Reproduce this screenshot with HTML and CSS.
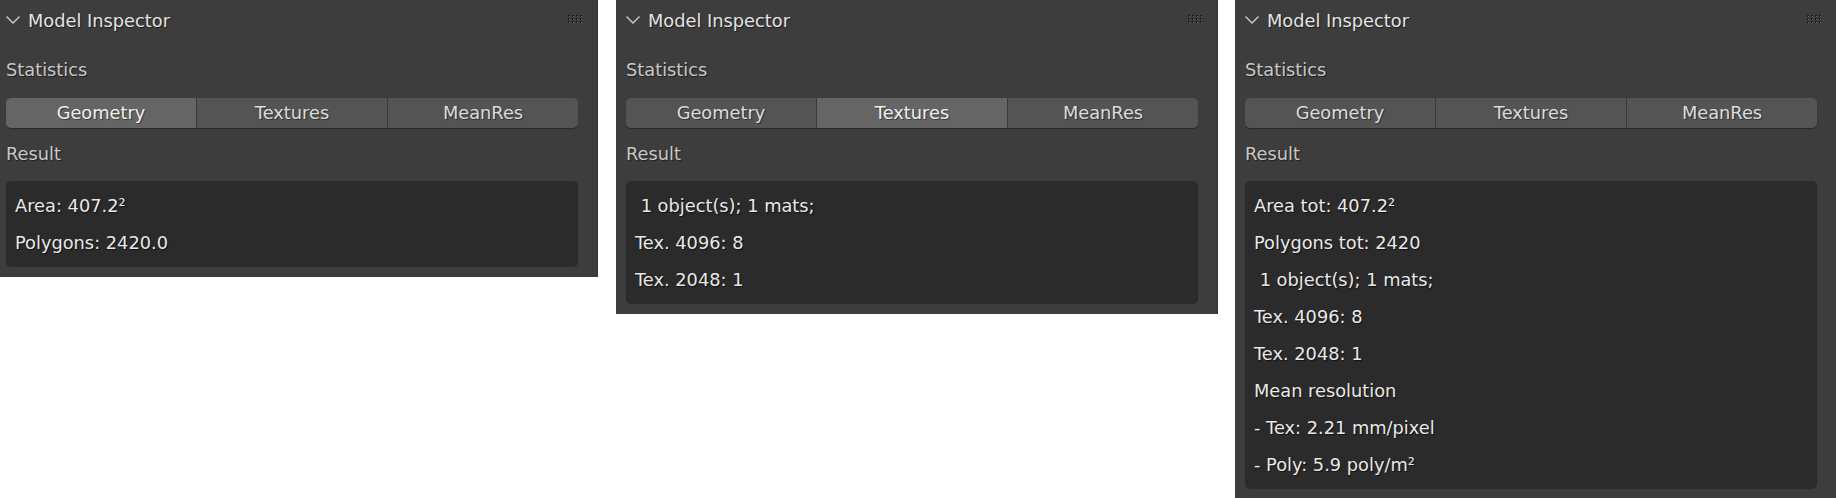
FILE: index.html
```html
<!DOCTYPE html>
<html lang="en">
<head>
<meta charset="utf-8">
<title>Model Inspector</title>
<link rel="stylesheet" href="styles.css">
</head>
<body>
<div class="panels">
  <section class="panel panel--cropped">
    <header class="panel-header">
      <svg class="chevron" width="16" height="10" viewBox="0 0 16 10"><polyline points="1.5,1.5 8,8 14.5,1.5" fill="none" stroke="#cfcfcf" stroke-width="1.3"/></svg>
      <span class="panel-title">Model Inspector</span>
      <svg class="grip" width="18" height="10" viewBox="0 0 18 10">
        <g fill="#1c1c1c"><rect x="1" y="1" width="2" height="2"/><rect x="5" y="1" width="2" height="2"/><rect x="9" y="1" width="2" height="2"/><rect x="13" y="1" width="2" height="2"/><rect x="1" y="4" width="2" height="2"/><rect x="5" y="4" width="2" height="2"/><rect x="9" y="4" width="2" height="2"/><rect x="13" y="4" width="2" height="2"/><rect x="1" y="7" width="2" height="2"/><rect x="5" y="7" width="2" height="2"/><rect x="9" y="7" width="2" height="2"/><rect x="13" y="7" width="2" height="2"/></g>
        <g fill="#6a6a6a"><rect x="2" y="2" width="1" height="1"/><rect x="6" y="2" width="1" height="1"/><rect x="10" y="2" width="1" height="1"/><rect x="14" y="2" width="1" height="1"/><rect x="2" y="5" width="1" height="1"/><rect x="6" y="5" width="1" height="1"/><rect x="10" y="5" width="1" height="1"/><rect x="14" y="5" width="1" height="1"/><rect x="2" y="8" width="1" height="1"/><rect x="6" y="8" width="1" height="1"/><rect x="10" y="8" width="1" height="1"/><rect x="14" y="8" width="1" height="1"/></g>
      </svg>
    </header>
    <div class="panel-body">
      <div class="label">Statistics</div>
      <div class="tabs">
        <div class="tab tab--active">Geometry</div>
        <div class="tab">Textures</div>
        <div class="tab">MeanRes</div>
      </div>
      <div class="label label--result">Result</div>
      <div class="result">
        <div class="row">Area: 407.2²</div>
        <div class="row">Polygons: 2420.0</div>
      </div>
    </div>
  </section>

  <section class="panel">
    <header class="panel-header">
      <svg class="chevron" width="16" height="10" viewBox="0 0 16 10"><polyline points="1.5,1.5 8,8 14.5,1.5" fill="none" stroke="#cfcfcf" stroke-width="1.3"/></svg>
      <span class="panel-title">Model Inspector</span>
      <svg class="grip" width="18" height="10" viewBox="0 0 18 10">
        <g fill="#1c1c1c"><rect x="1" y="1" width="2" height="2"/><rect x="5" y="1" width="2" height="2"/><rect x="9" y="1" width="2" height="2"/><rect x="13" y="1" width="2" height="2"/><rect x="1" y="4" width="2" height="2"/><rect x="5" y="4" width="2" height="2"/><rect x="9" y="4" width="2" height="2"/><rect x="13" y="4" width="2" height="2"/><rect x="1" y="7" width="2" height="2"/><rect x="5" y="7" width="2" height="2"/><rect x="9" y="7" width="2" height="2"/><rect x="13" y="7" width="2" height="2"/></g>
        <g fill="#6a6a6a"><rect x="2" y="2" width="1" height="1"/><rect x="6" y="2" width="1" height="1"/><rect x="10" y="2" width="1" height="1"/><rect x="14" y="2" width="1" height="1"/><rect x="2" y="5" width="1" height="1"/><rect x="6" y="5" width="1" height="1"/><rect x="10" y="5" width="1" height="1"/><rect x="14" y="5" width="1" height="1"/><rect x="2" y="8" width="1" height="1"/><rect x="6" y="8" width="1" height="1"/><rect x="10" y="8" width="1" height="1"/><rect x="14" y="8" width="1" height="1"/></g>
      </svg>
    </header>
    <div class="panel-body">
      <div class="label">Statistics</div>
      <div class="tabs">
        <div class="tab">Geometry</div>
        <div class="tab tab--active">Textures</div>
        <div class="tab">MeanRes</div>
      </div>
      <div class="label label--result">Result</div>
      <div class="result">
        <div class="row">&nbsp;1 object(s); 1 mats;</div>
        <div class="row">Tex. 4096: 8</div>
        <div class="row">Tex. 2048: 1</div>
      </div>
    </div>
  </section>

  <section class="panel panel--last">
    <header class="panel-header">
      <svg class="chevron" width="16" height="10" viewBox="0 0 16 10"><polyline points="1.5,1.5 8,8 14.5,1.5" fill="none" stroke="#cfcfcf" stroke-width="1.3"/></svg>
      <span class="panel-title">Model Inspector</span>
      <svg class="grip" width="18" height="10" viewBox="0 0 18 10">
        <g fill="#1c1c1c"><rect x="1" y="1" width="2" height="2"/><rect x="5" y="1" width="2" height="2"/><rect x="9" y="1" width="2" height="2"/><rect x="13" y="1" width="2" height="2"/><rect x="1" y="4" width="2" height="2"/><rect x="5" y="4" width="2" height="2"/><rect x="9" y="4" width="2" height="2"/><rect x="13" y="4" width="2" height="2"/><rect x="1" y="7" width="2" height="2"/><rect x="5" y="7" width="2" height="2"/><rect x="9" y="7" width="2" height="2"/><rect x="13" y="7" width="2" height="2"/></g>
        <g fill="#6a6a6a"><rect x="2" y="2" width="1" height="1"/><rect x="6" y="2" width="1" height="1"/><rect x="10" y="2" width="1" height="1"/><rect x="14" y="2" width="1" height="1"/><rect x="2" y="5" width="1" height="1"/><rect x="6" y="5" width="1" height="1"/><rect x="10" y="5" width="1" height="1"/><rect x="14" y="5" width="1" height="1"/><rect x="2" y="8" width="1" height="1"/><rect x="6" y="8" width="1" height="1"/><rect x="10" y="8" width="1" height="1"/><rect x="14" y="8" width="1" height="1"/></g>
      </svg>
    </header>
    <div class="panel-body">
      <div class="label">Statistics</div>
      <div class="tabs">
        <div class="tab">Geometry</div>
        <div class="tab">Textures</div>
        <div class="tab">MeanRes</div>
      </div>
      <div class="label label--result">Result</div>
      <div class="result">
        <div class="row">Area tot: 407.2²</div>
        <div class="row">Polygons tot: 2420</div>
        <div class="row">&nbsp;1 object(s); 1 mats;</div>
        <div class="row">Tex. 4096: 8</div>
        <div class="row">Tex. 2048: 1</div>
        <div class="row">Mean resolution</div>
        <div class="row">- Tex: 2.21 mm/pixel</div>
        <div class="row">- Poly: 5.9 poly/m²</div>
      </div>
    </div>
  </section>
</div>
</body>
</html>
```

FILE: styles.css
```css
html, body {
  margin: 0;
  padding: 0;
  background: #ffffff;
  overflow: hidden;
}

body {
  font-family: "DejaVu Sans", "Liberation Sans", sans-serif;
  font-size: 17.8px;
  color: #e4e4e4;
}

.panels {
  display: flex;
  align-items: flex-start;
  gap: 18px;
  width: 1860px;
}

.panel {
  width: 602px;
  flex: none;
  background: #3d3d3d;
  box-sizing: border-box;
  border-right: 1px solid #333333;
  padding-bottom: 12px;
}

.panel--cropped {
  margin-left: -4px;
}

.panel--last {
  margin-left: -1px;
}

.panel-header {
  height: 40px;
  display: flex;
  align-items: center;
  padding: 0 12px 0 9px;
}

.chevron {
  flex: none;
  margin-right: 7px;
}

.panel-title {
  flex: 1;
  padding-top: 1px;
  text-shadow: 1px 1px 1px rgba(0, 0, 0, 0.55);
}

.grip {
  flex: none;
  margin-top: -2px;
}

.panel-body {
  padding: 0 19px 0 10px;
}

.label {
  margin-top: 14px;
  height: 30px;
  box-sizing: border-box;
  padding-top: 2px;
  line-height: 28px;
  color: #c8c8c8;
  text-shadow: 1px 1px 1px rgba(0, 0, 0, 0.5);
}

.label--result {
  margin-top: 10px;
}

.tabs {
  margin-top: 14px;
  display: flex;
  height: 30px;
  border-radius: 5px;
  overflow: hidden;
  box-shadow: 0 1px 1px rgba(0, 0, 0, 0.35);
}

.tab {
  flex: 1;
  background: #545454;
  text-align: center;
  line-height: 30px;
  color: #dcdcdc;
  text-shadow: 1px 1px 1px rgba(0, 0, 0, 0.45);
}

.tab + .tab {
  border-left: 1px solid #3a3a3a;
}

.tab--active {
  background: #656565;
  color: #f0f0f0;
}

.result {
  margin-top: 13px;
  background: #2b2b2b;
  border-radius: 5px;
  padding: 5px 9px;
  box-shadow: 0 2px 1px rgba(0, 0, 0, 0.3);
}

.row {
  height: 37px;
  box-sizing: border-box;
  padding-top: 2px;
  line-height: 35px;
  white-space: pre;
  color: #e8e8e8;
  text-shadow: 1px 1px 1px rgba(0, 0, 0, 0.6);
}
```
